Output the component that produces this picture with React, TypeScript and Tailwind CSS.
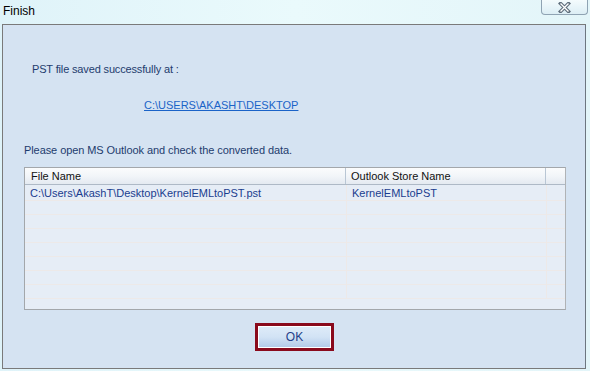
export default function App() {
  const rows = Array.from({ length: 8 })
  return (
    <div className="relative w-[590px] h-[371px] overflow-hidden bg-gradient-to-r from-[#dff3f9] via-[#eafafc] to-[#e3f5f9] font-['Liberation_Sans',Arial,sans-serif] text-[11px]">
      {/* title bar */}
      <div className="h-[24px] flex items-start">
        <span className="ml-[3px] mt-[2px] text-[12px] text-black">Finish</span>
      </div>
      <div className="absolute right-[2px] top-0 w-[47px] h-[15px] rounded-b-[4px] border border-t-0 border-[#8fa3b3] bg-gradient-to-b from-[#f4fbfd] to-[#dceef5] flex items-center justify-center">
        <svg width="13" height="11" viewBox="0 0 13 11">
          <path d="M2.5 1.5 L10.5 9.5 M10.5 1.5 L2.5 9.5" stroke="#5e6d7b" strokeWidth="3.5" strokeLinecap="square" />
          <path d="M2.5 1.5 L10.5 9.5 M10.5 1.5 L2.5 9.5" stroke="#ffffff" strokeWidth="1.3" />
        </svg>
      </div>

      {/* panel */}
      <div className="ml-[2px] w-[584px] h-[345px] border border-[#7a7a7a] border-r-[#6d7680] bg-[#d5e3f2] flex flex-col text-[#1e3c6e]">
        <div className="pl-[29px] mt-[37px] h-[14px] leading-[14px] tracking-[-0.15px]">PST file saved successfully at :</div>
        <div className="pl-[141px] mt-[22px] h-[14px] leading-[14px]">
          <span className="text-[#1a63c8] underline">C:\USERS\AKASHT\DESKTOP</span>
        </div>
        <div className="pl-[21px] mt-[31px] h-[14px] leading-[14px] tracking-[-0.08px]">Please open MS Outlook and check the converted data.</div>

        {/* list */}
        <div className="ml-[21px] mt-[10px] w-[542px] h-[143px] border border-[#a3a7ab] border-r-[#b0b3b6] bg-[#e6edf6] overflow-hidden">
          <div className="h-[17px] flex bg-gradient-to-b from-[#fbfcfd] via-[#f2f5f9] to-[#e4eaf1] border-b border-[#aeb9c6] text-[#111]">
            <div className="w-[321px] pl-[6px] leading-[17px] border-r border-[#b9c6d4]">File Name</div>
            <div className="w-[200px] pl-[5px] leading-[17px] border-r border-[#b9c6d4]">Outlook Store Name</div>
            <div className="flex-1" />
          </div>
          {rows.map((_, i) => (
            <div key={i} className={`${i === 0 ? 'h-[16px] leading-[17px]' : 'h-[14px] leading-[13px]'} flex border-b border-[#ede9e8]`}>
              <div className="w-[322px] pl-[5px] border-r border-[#ede9e8] text-[#1a3d8f]">
                {i === 0 ? 'C:\\Users\\AkashT\\Desktop\\KernelEMLtoPST.pst' : ''}
              </div>
              <div className="w-[200px] pl-[5px] border-r border-[#ede9e8] text-[#1a3d8f]">
                {i === 0 ? 'KernelEMLtoPST' : ''}
              </div>
              <div className="flex-1" />
            </div>
          ))}
        </div>

        {/* button */}
        <div className="flex justify-center mt-[13px] pl-[1px]">
          <div className="w-[79px] h-[28px] border-[3px] border-[#8a0a1c] bg-white p-[1px]">
            <div className="w-full h-full bg-gradient-to-b from-[#deebf8] via-[#d2e3f5] to-[#b4cbe8] flex items-center justify-center text-[12px] text-[#1f3f8a]">
              OK
            </div>
          </div>
        </div>
      </div>
    </div>
  )
}
